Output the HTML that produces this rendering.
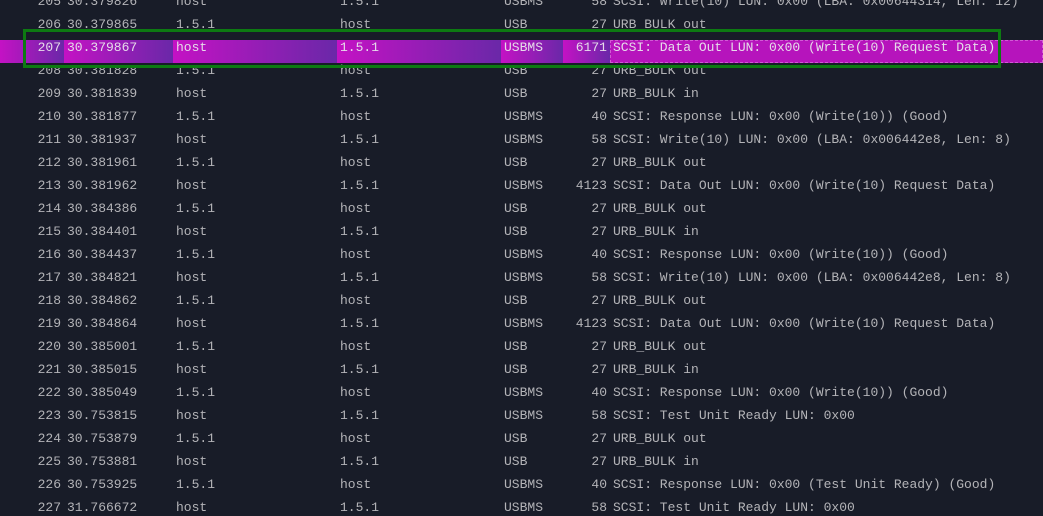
<!DOCTYPE html>
<html><head><meta charset="utf-8"><style>
html,body{margin:0;padding:0;width:1043px;height:516px;overflow:hidden;background:#181c28}
body{position:relative;font-family:"Liberation Mono",monospace;font-size:13px;color:#b4b4b8}
.r{position:absolute;left:0;width:1043px;height:23px;}
.r span{position:absolute;top:0;line-height:15px;white-space:pre}
.n{left:0;width:61px;text-align:right}
.t{left:67px}.s{left:176px}.d{left:340px}.p{left:504px}
.l{left:540px;width:67px;text-align:right}
.i{left:613px}
.hl .c{position:absolute;top:0;height:23px;background:linear-gradient(90deg,#c412c4,#6a28a8)}
.hl span{color:#e6dcea}
.box{position:absolute;left:23px;top:29px;width:972px;height:33px;border:3px solid #0d7a12}
</style></head><body>
<div class="r" style="top:-6px"><span class="n">205</span><span class="t">30.379826</span><span class="s">host</span><span class="d">1.5.1</span><span class="p">USBMS</span><span class="l">58</span><span class="i">SCSI: Write(10) LUN: 0x00 (LBA: 0x00644314, Len: 12)</span></div>
<div class="r" style="top:17px"><span class="n">206</span><span class="t">30.379865</span><span class="s">1.5.1</span><span class="d">host</span><span class="p">USB</span><span class="l">27</span><span class="i">URB_BULK out</span></div>
<div class="r hl" style="top:40px">
<div class="c" style="left:0;width:64px"></div>
<div class="c" style="left:64px;width:109px"></div>
<div class="c" style="left:173px;width:164px"></div>
<div class="c" style="left:337px;width:164px"></div>
<div class="c" style="left:501px;width:62px"></div>
<div class="c" style="left:563px;width:47px"></div>
<div class="c" style="left:610px;width:433px;background:#b614bc;border:1px dashed #d05ad4;box-sizing:border-box"></div>
<span class="n" style="top:0">207</span><span class="t">30.379867</span><span class="s">host</span><span class="d">1.5.1</span><span class="p">USBMS</span><span class="l">6171</span><span class="i">SCSI: Data Out LUN: 0x00 (Write(10) Request Data)</span></div>
<div class="r" style="top:63px"><span class="n">208</span><span class="t">30.381828</span><span class="s">1.5.1</span><span class="d">host</span><span class="p">USB</span><span class="l">27</span><span class="i">URB_BULK out</span></div>
<div class="r" style="top:86px"><span class="n">209</span><span class="t">30.381839</span><span class="s">host</span><span class="d">1.5.1</span><span class="p">USB</span><span class="l">27</span><span class="i">URB_BULK in</span></div>
<div class="r" style="top:109px"><span class="n">210</span><span class="t">30.381877</span><span class="s">1.5.1</span><span class="d">host</span><span class="p">USBMS</span><span class="l">40</span><span class="i">SCSI: Response LUN: 0x00 (Write(10)) (Good)</span></div>
<div class="r" style="top:132px"><span class="n">211</span><span class="t">30.381937</span><span class="s">host</span><span class="d">1.5.1</span><span class="p">USBMS</span><span class="l">58</span><span class="i">SCSI: Write(10) LUN: 0x00 (LBA: 0x006442e8, Len: 8)</span></div>
<div class="r" style="top:155px"><span class="n">212</span><span class="t">30.381961</span><span class="s">1.5.1</span><span class="d">host</span><span class="p">USB</span><span class="l">27</span><span class="i">URB_BULK out</span></div>
<div class="r" style="top:178px"><span class="n">213</span><span class="t">30.381962</span><span class="s">host</span><span class="d">1.5.1</span><span class="p">USBMS</span><span class="l">4123</span><span class="i">SCSI: Data Out LUN: 0x00 (Write(10) Request Data)</span></div>
<div class="r" style="top:201px"><span class="n">214</span><span class="t">30.384386</span><span class="s">1.5.1</span><span class="d">host</span><span class="p">USB</span><span class="l">27</span><span class="i">URB_BULK out</span></div>
<div class="r" style="top:224px"><span class="n">215</span><span class="t">30.384401</span><span class="s">host</span><span class="d">1.5.1</span><span class="p">USB</span><span class="l">27</span><span class="i">URB_BULK in</span></div>
<div class="r" style="top:247px"><span class="n">216</span><span class="t">30.384437</span><span class="s">1.5.1</span><span class="d">host</span><span class="p">USBMS</span><span class="l">40</span><span class="i">SCSI: Response LUN: 0x00 (Write(10)) (Good)</span></div>
<div class="r" style="top:270px"><span class="n">217</span><span class="t">30.384821</span><span class="s">host</span><span class="d">1.5.1</span><span class="p">USBMS</span><span class="l">58</span><span class="i">SCSI: Write(10) LUN: 0x00 (LBA: 0x006442e8, Len: 8)</span></div>
<div class="r" style="top:293px"><span class="n">218</span><span class="t">30.384862</span><span class="s">1.5.1</span><span class="d">host</span><span class="p">USB</span><span class="l">27</span><span class="i">URB_BULK out</span></div>
<div class="r" style="top:316px"><span class="n">219</span><span class="t">30.384864</span><span class="s">host</span><span class="d">1.5.1</span><span class="p">USBMS</span><span class="l">4123</span><span class="i">SCSI: Data Out LUN: 0x00 (Write(10) Request Data)</span></div>
<div class="r" style="top:339px"><span class="n">220</span><span class="t">30.385001</span><span class="s">1.5.1</span><span class="d">host</span><span class="p">USB</span><span class="l">27</span><span class="i">URB_BULK out</span></div>
<div class="r" style="top:362px"><span class="n">221</span><span class="t">30.385015</span><span class="s">host</span><span class="d">1.5.1</span><span class="p">USB</span><span class="l">27</span><span class="i">URB_BULK in</span></div>
<div class="r" style="top:385px"><span class="n">222</span><span class="t">30.385049</span><span class="s">1.5.1</span><span class="d">host</span><span class="p">USBMS</span><span class="l">40</span><span class="i">SCSI: Response LUN: 0x00 (Write(10)) (Good)</span></div>
<div class="r" style="top:408px"><span class="n">223</span><span class="t">30.753815</span><span class="s">host</span><span class="d">1.5.1</span><span class="p">USBMS</span><span class="l">58</span><span class="i">SCSI: Test Unit Ready LUN: 0x00</span></div>
<div class="r" style="top:431px"><span class="n">224</span><span class="t">30.753879</span><span class="s">1.5.1</span><span class="d">host</span><span class="p">USB</span><span class="l">27</span><span class="i">URB_BULK out</span></div>
<div class="r" style="top:454px"><span class="n">225</span><span class="t">30.753881</span><span class="s">host</span><span class="d">1.5.1</span><span class="p">USB</span><span class="l">27</span><span class="i">URB_BULK in</span></div>
<div class="r" style="top:477px"><span class="n">226</span><span class="t">30.753925</span><span class="s">1.5.1</span><span class="d">host</span><span class="p">USBMS</span><span class="l">40</span><span class="i">SCSI: Response LUN: 0x00 (Test Unit Ready) (Good)</span></div>
<div class="r" style="top:500px"><span class="n">227</span><span class="t">31.766672</span><span class="s">host</span><span class="d">1.5.1</span><span class="p">USBMS</span><span class="l">58</span><span class="i">SCSI: Test Unit Ready LUN: 0x00</span></div>
<div class="box"></div>
</body></html>
